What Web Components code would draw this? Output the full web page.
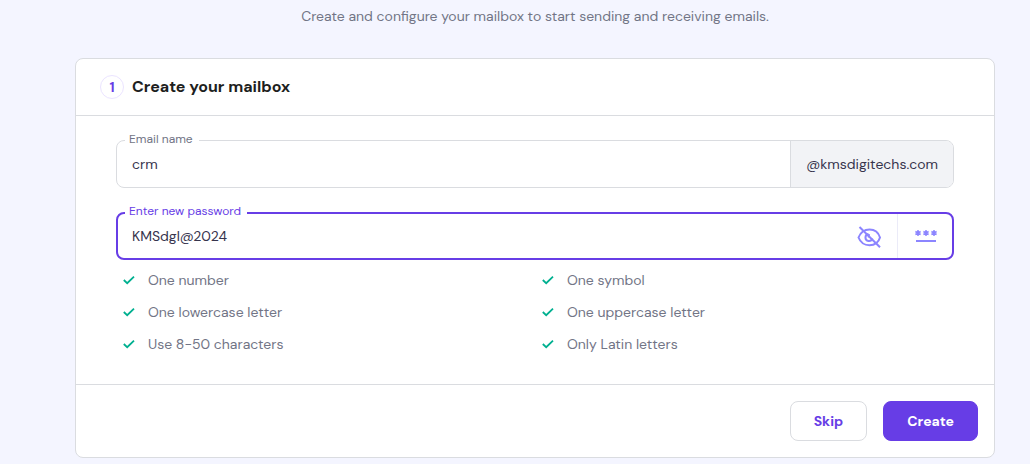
<!DOCTYPE html>
<html lang="en">
<head>
<meta charset="utf-8">
<title>Create your mailbox</title>
<style>
  body {
    margin: 0;
    min-height: 100vh;
    background: #f4f5ff;
    color: #36344d;
    font: 14px/24px "DM Sans", Inter, "Open Sans", sans-serif;
    --primary: #673de6;
    --icon: #8c85ff;
    --border: #dadce0;
    --muted: #727586;
    --success: #00b090;
  }
</style>
</head>
<body>
<mailbox-page>
  <span slot="intro">Create and configure your mailbox to start sending and receiving emails.</span>
  <step-card step="1" heading="Create your mailbox">
    <outlined-field label="Email name" value="crm">
      <domain-suffix slot="end">@kmsdigitechs.com</domain-suffix>
    </outlined-field>
    <outlined-field label="Enter new password" value="KMSdgl@2024" active>
      <password-tools slot="end"></password-tools>
    </outlined-field>
    <rule-list>
      <rule-item>One number</rule-item>
      <rule-item>One symbol</rule-item>
      <rule-item>One lowercase letter</rule-item>
      <rule-item>One uppercase letter</rule-item>
      <rule-item>Use 8-50 characters</rule-item>
      <rule-item>Only Latin letters</rule-item>
    </rule-list>
    <action-button slot="actions">Skip</action-button>
    <action-button slot="actions" primary>Create</action-button>
  </step-card>
</mailbox-page>

<script>
const define = (name, html, setup) => {
  const template = document.createElement('template');
  template.innerHTML = '<style>*{box-sizing:border-box}</style>' + html;
  customElements.define(name, class extends HTMLElement {
    constructor() {
      super();
      this.attachShadow({ mode: 'open' }).append(template.content.cloneNode(true));
    }
    connectedCallback() {
      if (setup) setup(this, this.shadowRoot);
    }
  });
};

define('mailbox-page', `
  <style>
    :host { display: block; padding-left: 40px; }
    main { max-width: 920px; margin: 0 auto; }
    p { margin: 0; padding: 4px 0 30px; text-align: center; color: var(--muted); }
  </style>
  <main><p><slot name="intro"></slot></p><slot></slot></main>`);

define('step-card', `
  <style>
    :host { display: block; background: #fff; border: 1px solid var(--border); border-radius: 8px; }
    header { display: flex; align-items: center; gap: 8px; padding: 16px 24px; border-bottom: 1px solid var(--border); }
    .step { width: 24px; height: 24px; line-height: 22px; text-align: center; border: 1px solid #ebe4ff; border-radius: 50%; color: var(--primary); font-weight: 700; }
    h2 { margin: 0; font-size: 16px; line-height: 24px; font-weight: 700; color: #1d1e20; }
    .body { display: flex; flex-direction: column; gap: 17px; padding: 16px 40px 24px; }
    footer { display: flex; justify-content: flex-end; gap: 16px; padding: 16px; border-top: 1px solid var(--border); }
    ::slotted(rule-list) { margin-top: -13px; }
  </style>
  <header><span class="step"></span><h2></h2></header>
  <div class="body"><slot></slot></div>
  <footer><slot name="actions"></slot></footer>`,
  (host, root) => {
    root.querySelector('.step').textContent = host.getAttribute('step');
    root.querySelector('h2').textContent = host.getAttribute('heading');
  });

define('outlined-field', `
  <style>
    :host { display: block; --w: 1px; --line: var(--border); --label: var(--muted); }
    :host([active]) { --w: 2px; --line: var(--primary); --label: var(--primary); }
    fieldset { margin: 0; padding: 0; min-width: 0; border: var(--w) solid var(--line); border-radius: 8px; }
    legend { margin-left: calc(9px - var(--w)); padding: 0 6px calc(2 * var(--w)) 4px; font-size: 12px; line-height: calc(16px - 2 * var(--w)); color: var(--label); }
    label { display: block; }
    .row { display: flex; height: calc(48px - 2 * var(--w)); margin-top: -7px; }
    input { flex: 1; min-width: 0; border: 0; outline: 0; margin: 0; padding: 0 0 0 calc(16px - var(--w)); background: none; color: inherit; font: inherit; }
  </style>
  <fieldset>
    <legend><label for="control"></label></legend>
    <div class="row"><input id="control" type="text" autocomplete="off" spellcheck="false"><slot name="end"></slot></div>
  </fieldset>`,
  (host, root) => {
    root.querySelector('label').textContent = host.getAttribute('label');
    root.querySelector('input').value = host.getAttribute('value');
  });

define('domain-suffix', `
  <style>
    :host { display: flex; align-items: center; padding: 0 15px; border-left: 1px solid var(--border); border-radius: 0 7px 7px 0; background: #f2f3f6; }
  </style>
  <slot></slot>`);

define('password-tools', `
  <style>
    :host { display: flex; }
    button { display: flex; align-items: center; justify-content: center; width: 56px; border: 0; padding: 2px 0 0; background: none; color: var(--icon); }
    button + button { width: 55px; border-left: 1px solid #ebebf8; }
  </style>
  <button type="button" aria-label="Hide password">
    <svg width="24" height="24" viewBox="0 0 24 24" fill="none" stroke="currentColor" stroke-width="2">
      <path d="M1.500 12.500C3.500 7.500 7.500 4.500 12.500 4.500S21.500 7.500 23 12.500C21.500 17.500 17.500 20.200 12.500 20.200S3.500 17.500 1.500 12.500Z"/>
      <path d="M11.500 9A3.500 3.500 0 1 0 15.300 13.500M11.800 9V12.500"/>
      <path d="M2.500 2L23 22.300"/>
    </svg>
  </button>
  <button type="button" aria-label="Generate password">
    <svg width="24" height="24" viewBox="0 0 24 24" fill="none" stroke="currentColor">
      <path stroke-width="2" d="M3 16H23"/>
      <path stroke-width="1.500" d="M5 5V11M2.400 6.500L7.600 9.500M2.400 9.500L7.600 6.500M13 5V11M10.400 6.500L15.600 9.500M10.400 9.500L15.600 6.500M21 5V11M18.400 6.500L23.600 9.500M18.400 9.500L23.600 6.500"/>
    </svg>
  </button>`);

define('rule-list', `
  <style>
    :host { display: grid; grid-template-columns: 1fr 1fr; color: var(--muted); }
  </style>
  <slot></slot>`, host => host.setAttribute('role', 'list'));

define('rule-item', `
  <style>
    :host { display: flex; align-items: center; gap: 11px; height: 32px; padding-left: 5px; }
    svg { color: var(--success); }
  </style>
  <svg width="16" height="16" viewBox="0 0 16 16" fill="none" stroke="currentColor" stroke-width="1.800"><path d="M2.800 8L6.200 11.200L13 4.600"/></svg>
  <span><slot></slot></span>`, host => host.setAttribute('role', 'listitem'));

define('action-button', `
  <style>
    :host { display: block; }
    button { height: 40px; padding: 0 23px; border: 1px solid var(--border); border-radius: 8px; background: #fff; color: var(--primary); font: inherit; font-weight: 700; }
    :host([primary]) button { background: var(--primary); border-color: var(--primary); color: #fff; }
  </style>
  <button type="button"><slot></slot></button>`);
</script>
</body>
</html>
